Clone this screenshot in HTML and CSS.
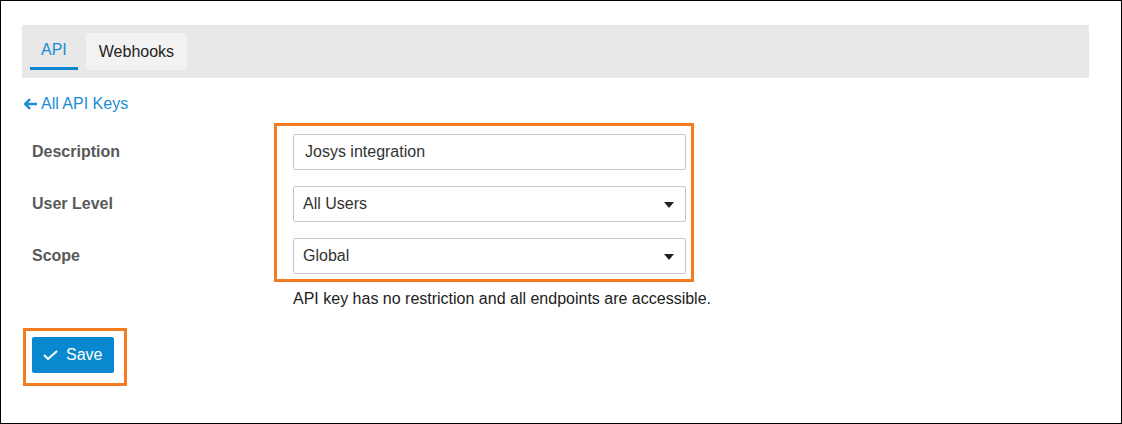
FILE: index.html
```html
<!DOCTYPE html>
<html lang="en">
<head>
<meta charset="utf-8">
<title>API Key</title>
<link rel="stylesheet" href="styles.css">
</head>
<body>
<div class="page">
  <div class="content">
    <div class="tabbar">
      <div class="tab active">API</div>
      <div class="tab">Webhooks</div>
    </div>
    <a class="back" href="#"><svg class="arrow" width="14" height="12" viewBox="0 0 14 12"><path d="M14 6H3M7 1.2L2.2 6 7 10.8" fill="none" stroke="currentColor" stroke-width="2.4"/></svg>All API Keys</a>
    <div class="form">
      <div class="labels">
        <div class="label">Description</div>
        <div class="label">User Level</div>
        <div class="label">Scope</div>
      </div>
      <div class="highlight fields">
        <div class="field text">Josys integration</div>
        <div class="field select">All Users<span class="caret"></span></div>
        <div class="field select">Global<span class="caret"></span></div>
      </div>
    </div>
    <p class="help">API key has no restriction and all endpoints are accessible.</p>
    <div class="highlight save-wrap">
      <button class="save"><svg width="15" height="10" viewBox="0 0 15 10"><path d="M1 5l4 4 9-8" fill="none" stroke="#fff" stroke-width="2"/></svg>Save</button>
    </div>
  </div>
</div>
</body>
</html>
```

FILE: styles.css
```css
* { box-sizing: border-box; }
html, body { margin: 0; padding: 0; }
body {
  font-family: "Liberation Sans", Arial, sans-serif;
  font-size: 16px;
  color: #222;
  background: #fff;
}
.page {
  width: 1122px;
  height: 424px;
  border: 1px solid #000;
  overflow: hidden;
}
.content {
  padding: 24px 32px 0 21px;
}
.tabbar {
  height: 53px;
  background: #e8e8e8;
  display: flex;
  gap: 8px;
  padding: 8px 0 0 8px;
}
.tab {
  height: 37px;
  padding: 0 13px;
  display: flex;
  align-items: center;
  line-height: 20px;
  color: #222;
  background: #f2f2f2;
  border-radius: 3px;
}
.tab.active {
  background: transparent;
  color: #1a8dd4;
  border-bottom: 3px solid #0d87cf;
  border-radius: 0;
  padding: 0 11px 0 11px;
  align-items: center;
}
.back {
  display: flex;
  align-items: center;
  margin-top: 16px;
  line-height: 20px;
  color: #1a8dd4;
  text-decoration: none;
  width: max-content;
}
.back .arrow { margin-left: 1px; margin-right: 4px; }
.form {
  display: flex;
  margin-top: 9px;
}
.labels {
  width: 252px;
  padding: 11px 0 0 10px;
  display: flex;
  flex-direction: column;
  gap: 16px;
}
.label {
  height: 36px;
  display: flex;
  align-items: center;
  font-weight: bold;
  color: #595959;
}
.highlight {
  border: 3px solid #f47b20;
}
.fields {
  width: 420px;
  padding: 8px 5px 5px 16px;
  display: flex;
  flex-direction: column;
  gap: 16px;
}
.field {
  height: 36px;
  border: 1px solid #c6c6c6;
  border-radius: 2px;
  display: flex;
  align-items: center;
  color: #333;
  position: relative;
}
.field.text { padding-left: 11px; }
.field.select { padding-left: 9px; }
.caret {
  position: absolute;
  right: 11px;
  top: 15px;
  width: 0;
  height: 0;
  border-left: 5px solid transparent;
  border-right: 5px solid transparent;
  border-top: 6px solid #222;
}
.help {
  margin: 7px 0 0 271px;
  line-height: 20px;
  color: #222;
}
.save-wrap {
  margin: 19px 0 0 1px;
  width: 104px;
  padding: 6px 9px 10px 6px;
}
.save {
  width: 82px;
  height: 36px;
  border: none;
  border-radius: 2px;
  background: #0a88cf;
  color: #fff;
  font-family: inherit;
  font-size: 16px;
  display: flex;
  align-items: center;
  padding: 0 0 0 11px;
  gap: 8px;
  cursor: pointer;
}
```
